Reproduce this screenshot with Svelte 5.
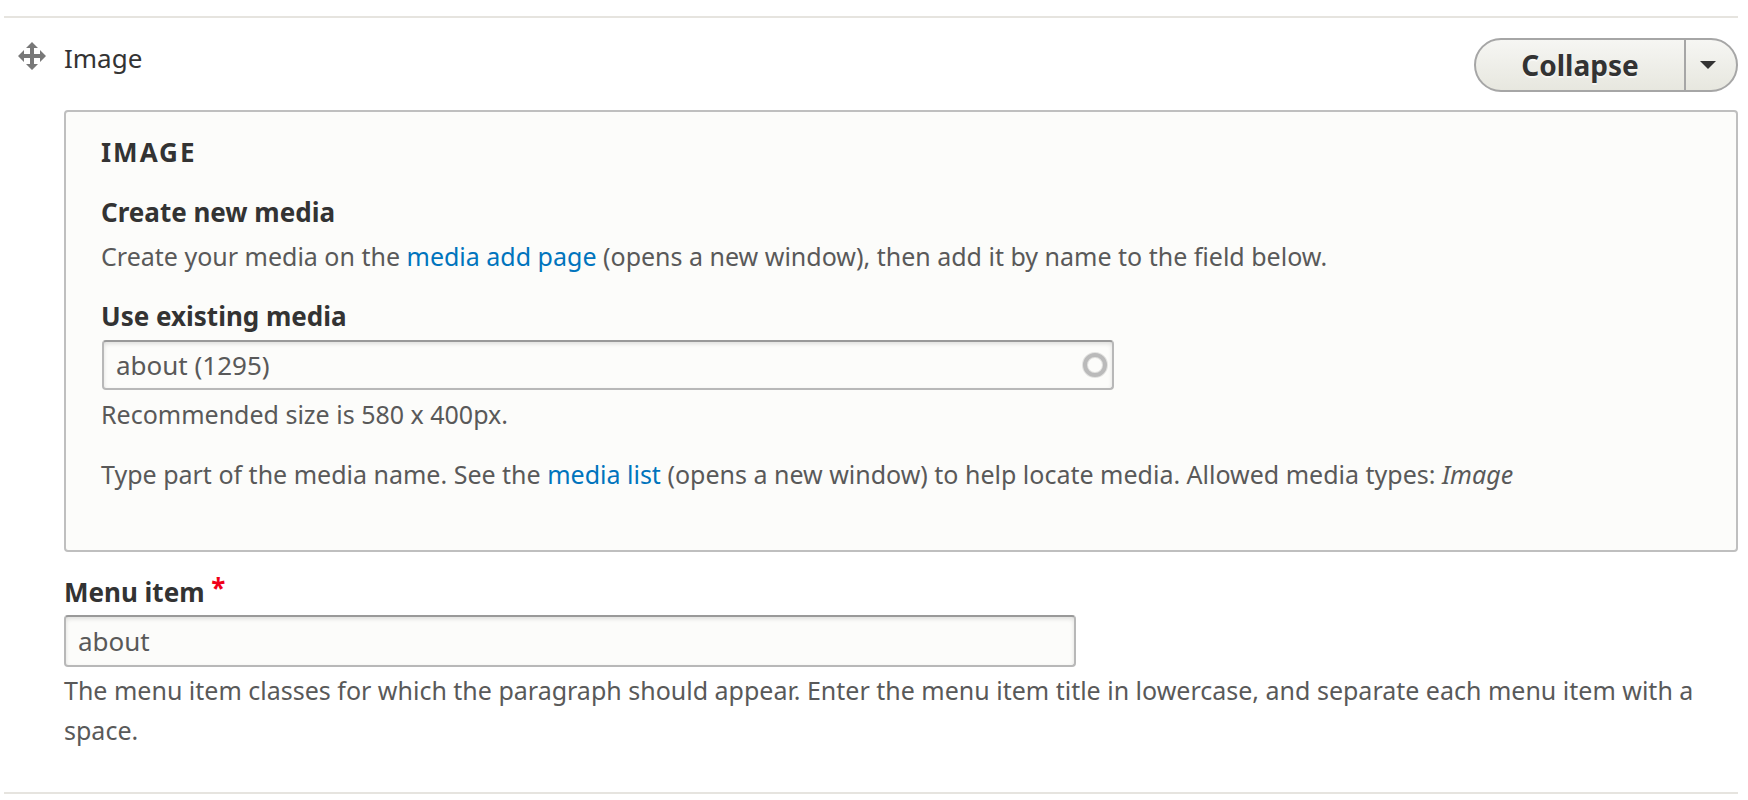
<script>
  let media = $state('about (1295)');
  let menuItem = $state('about');
</script>

<main class="paragraph">
  <button class="drag" type="button" aria-label="Drag to re-order">
    <svg viewBox="0 0 28 28" width="28" height="28" aria-hidden="true">
      <path fill="#787878" d="M14 0 L20 6 H16 V12 H22 V8 L28 14 L22 20 V16 H16 V22 H20 L14 28 L8 22 H12 V16 H6 V20 L0 14 L6 8 V12 H12 V6 H8 Z" />
    </svg>
  </button>

  <div class="content">
    <header>
      <span class="type">Image</span>
      <div class="actions">
        <button class="collapse" type="button">Collapse</button>
        <button class="toggle" type="button" aria-label="List additional actions">
          <svg viewBox="0 0 16 8" width="16" height="8" aria-hidden="true">
            <path fill="#333" d="M0 0 H16 L8 8 Z" />
          </svg>
        </button>
      </div>
    </header>

    <section class="fieldset">
      <h2>Image</h2>
      <div class="group">
        <h3>Create new media</h3>
        <p>
          Create your media on the <a href="#add">media add page</a> (opens a new window), then add it by name to the field below.
        </p>
      </div>
      <div class="group">
        <label for="media">Use existing media</label>
        <div class="autocomplete">
          <input id="media" class="media" type="text" bind:value={media} />
          <svg class="throbber" viewBox="0 0 26 26" width="26" height="26" aria-hidden="true">
            <circle cx="13" cy="13" r="10" fill="none" stroke="#e2e2e0" stroke-width="6" />
            <circle cx="13" cy="13" r="10" fill="none" stroke="#bababa" stroke-width="4" />
          </svg>
        </div>
        <p>Recommended size is 580 x 400px.</p>
      </div>
      <p>
        Type part of the media name. See the <a href="#list">media list</a> (opens a new window) to help locate media. Allowed media types: <em>Image</em>
      </p>
    </section>

    <div class="group menu">
      <label for="menu">Menu item <span class="required" aria-hidden="true">*</span></label>
      <input id="menu" type="text" required bind:value={menuItem} />
      <p>
        The menu item classes for which the paragraph should appear. Enter the menu item title in lowercase, and separate each menu item with a space.
      </p>
    </div>
  </div>
</main>

<style>
  :global(body) {
    margin: 0;
    background: #fff;
  }
  .paragraph {
    display: flex;
    gap: 18px;
    margin: 16px 10px 0 4px;
    padding: 20px 0 42px 14px;
    border-top: 2px solid #e6e4df;
    border-bottom: 2px solid #e6e4df;
    color: #333;
    font-family: 'Noto Sans', sans-serif;
    font-size: 26px;
    line-height: 40px;
  }
  button {
    margin: 0;
    padding: 0;
    border: 0;
    background: none;
    color: inherit;
    font: inherit;
    cursor: pointer;
  }
  .drag {
    flex: none;
    align-self: flex-start;
    margin-top: 4px;
    cursor: move;
  }
  svg {
    display: block;
  }
  .content {
    flex: 1;
    min-width: 0;
  }
  header {
    display: flex;
    justify-content: space-between;
    align-items: flex-start;
    margin-bottom: 18px;
  }
  .actions {
    display: flex;
    box-sizing: border-box;
    height: 54px;
    border: 2px solid #a6a6a6;
    border-radius: 27px;
    overflow: hidden;
    background: linear-gradient(#f6f6f3, #e7e7df);
  }
  .collapse {
    min-width: 208px;
    padding: 0 42px;
    font-size: 28px;
    font-weight: 700;
    text-shadow: 0 2px #fff9;
  }
  .toggle {
    display: grid;
    place-items: center;
    width: 52px;
    padding-right: 6px;
    border-left: 2px solid #a6a6a6;
  }
  .fieldset {
    padding: 20px 35px 56px;
    border: 2px solid #bfbfbf;
    border-radius: 4px;
    background: #fcfcfa;
  }
  h2,
  h3,
  p {
    margin: 0;
    font-size: inherit;
  }
  h2,
  h3,
  label {
    font-weight: 700;
  }
  h2 {
    margin-bottom: 20px;
    letter-spacing: 2px;
    text-transform: uppercase;
  }
  .group {
    display: flex;
    flex-direction: column;
    gap: 4px;
  }
  .fieldset .group {
    margin-bottom: 20px;
  }
  p {
    color: #595959;
    font-size: 25px;
  }
  a {
    color: #0074bd;
    text-decoration: none;
  }
  input {
    box-sizing: border-box;
    width: 100%;
    max-width: 1012px;
    height: 52px;
    padding: 0 12px;
    border: 2px solid #b8b8b8;
    border-top-color: #999;
    border-radius: 4px;
    background: #fcfcfa;
    box-shadow: inset 0 2px 4px #0000001f;
    color: #595959;
    font: inherit;
  }
  .media {
    display: block;
    height: 50px;
    padding-right: 40px;
  }
  .autocomplete {
    display: grid;
    align-items: center;
    max-width: 1012px;
    margin-left: 1px;
  }
  .autocomplete > * {
    grid-area: 1 / 1;
  }
  .throbber {
    justify-self: end;
    margin-right: 6px;
  }
  .menu {
    gap: 3px;
    padding-top: 20px;
  }
  .required {
    color: #f00018;
    line-height: 1;
    vertical-align: 4px;
  }
</style>
